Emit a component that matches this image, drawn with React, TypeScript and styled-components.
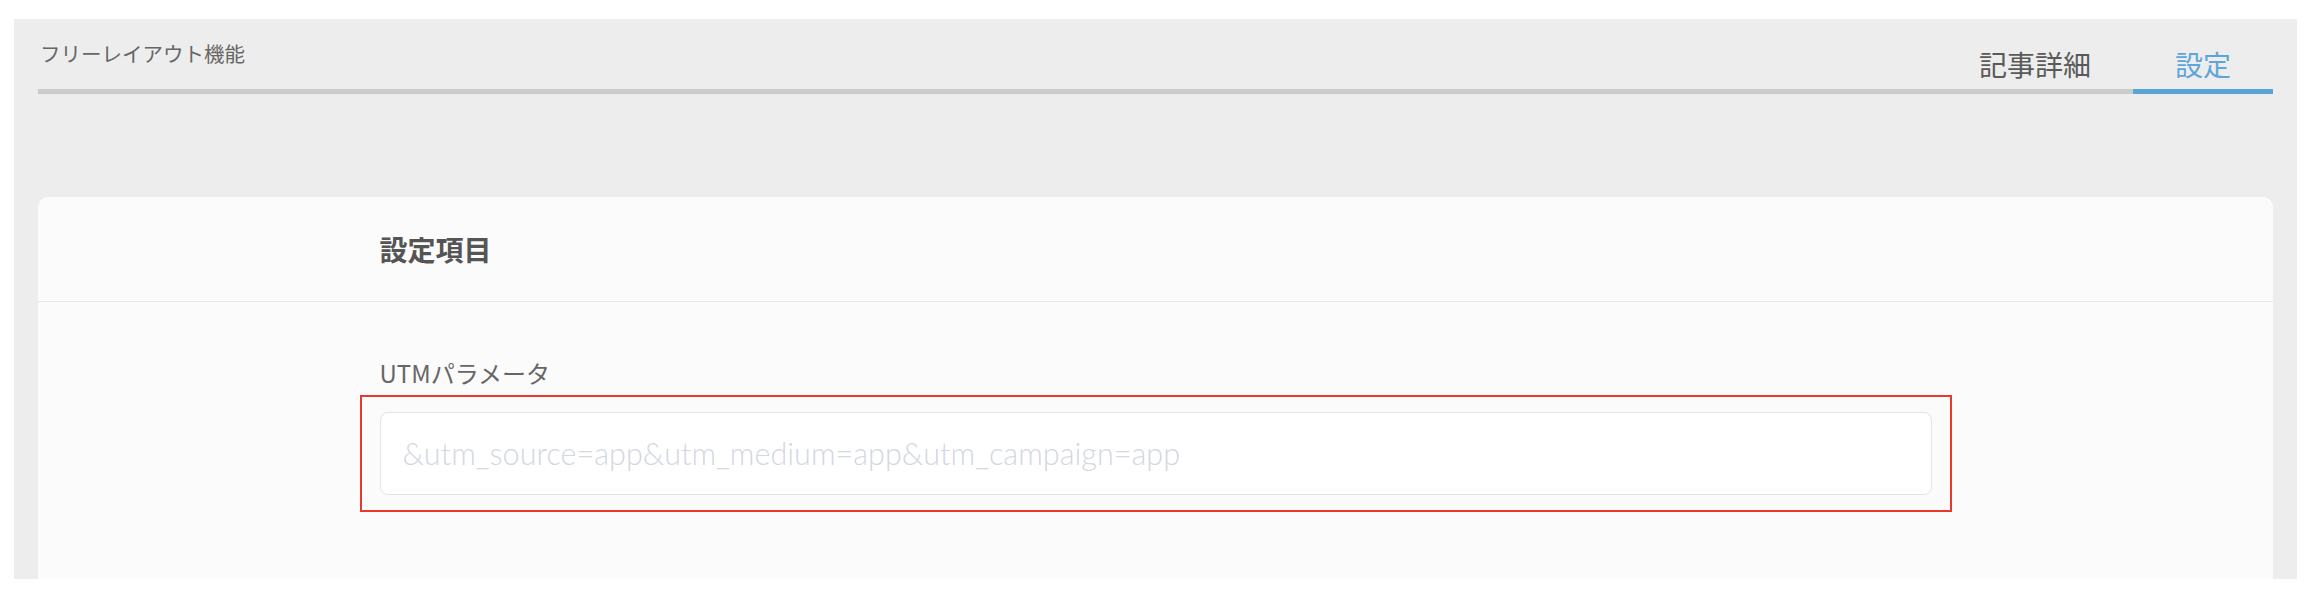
import React from 'react';
import styled, { createGlobalStyle } from 'styled-components';

const GlobalStyle = createGlobalStyle`
  body {
    margin: 0;
    background: #ffffff;
    font-family: "Noto Sans CJK JP", "Noto Sans", sans-serif;
  }
`;

const Page = styled.div`
  padding: 19px 13px 0 14px;
`;

const Panel = styled.section`
  box-sizing: border-box;
  height: 560px;
  overflow: hidden;
  padding: 19px 24px 0;
  background: #ededed;
`;

const TabHeader = styled.header`
  display: flex;
  height: 51px;
  border-bottom: 5px solid #cccccc;
`;

const PageTitle = styled.h1`
  flex: 1;
  align-self: flex-start;
  margin: 0 0 0 2px;
  font-size: 20.5px;
  font-weight: 400;
  line-height: 30px;
  color: #666666;
`;

const TabList = styled.nav`
  display: flex;
  align-self: flex-end;
`;

const Tab = styled.div<{ $active?: boolean }>`
  padding: 0 42px 4px;
  margin-bottom: -5px;
  font-size: 28px;
  line-height: 42px;
  color: ${(p) => (p.$active ? '#5ea6da' : '#5a5a5a')};
  border-bottom: 5px solid ${(p) => (p.$active ? '#5aa4d9' : 'transparent')};
`;

const Card = styled.div`
  height: 480px;
  margin-top: 103px;
  background: #fbfbfb;
  border-radius: 10px 10px 0 0;
`;

const CardHeader = styled.div`
  display: flex;
  align-items: center;
  height: 104px;
  border-bottom: 1px solid #e9e9e9;
`;

const Column = styled.div`
  width: 1552px;
  margin: 0 auto;
`;

const CardTitle = styled.h2`
  margin: 0;
  font-size: 28px;
  font-weight: 700;
  line-height: 42px;
  color: #555555;
`;

const CardBody = styled.div`
  padding-top: 54px;
`;

const FieldLabel = styled.label`
  display: block;
  margin-bottom: 6px;
  font-size: 24px;
  font-weight: 400;
  line-height: 33px;
  color: #666666;
`;

const Highlight = styled.div`
  margin: 0 -20px;
  padding: 15px 18px;
  border: 2px solid #e8392c;
`;

const TextInput = styled.input`
  display: block;
  box-sizing: border-box;
  width: 100%;
  height: 83px;
  padding: 0 22px;
  border: 1px solid #e2e4ea;
  border-radius: 8px;
  background: #ffffff;
  font-family: Lato, "Noto Sans", sans-serif;
  font-size: 30.6px;
  font-weight: 300;
  color: #444444;
  outline: none;

  &::placeholder {
    color: #d4d7df;
  }
`;

const App: React.FC = () => {
  return (
    <>
      <GlobalStyle />
      <Page>
        <Panel>
          <TabHeader>
            <PageTitle>フリーレイアウト機能</PageTitle>
            <TabList>
              <Tab>記事詳細</Tab>
              <Tab $active>設定</Tab>
            </TabList>
          </TabHeader>
          <Card>
            <CardHeader>
              <Column>
                <CardTitle>設定項目</CardTitle>
              </Column>
            </CardHeader>
            <CardBody>
              <Column>
                <FieldLabel htmlFor="utm">UTMパラメータ</FieldLabel>
                <Highlight>
                  <TextInput
                    id="utm"
                    placeholder="&utm_source=app&utm_medium=app&utm_campaign=app"
                  />
                </Highlight>
              </Column>
            </CardBody>
          </Card>
        </Panel>
      </Page>
    </>
  );
};

export default App;
